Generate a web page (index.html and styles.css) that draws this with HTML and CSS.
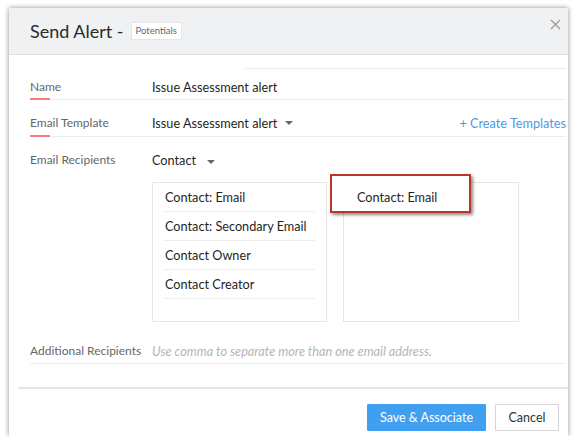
FILE: index.html
```html
<!DOCTYPE html>
<html>
<head>
<meta charset="utf-8">
<link rel="stylesheet" href="styles.css">
</head>
<body>
<div class="dialog">
  <div class="header">
    <span class="title">Send Alert -</span>
    <span class="badge">Potentials</span>
    <span class="close"><svg width="11" height="11" viewBox="0 0 11 11"><path d="M1 1L10 10M10 1L1 10" stroke="#9a9a9a" stroke-width="1.3" fill="none"/></svg></span>
  </div>
  <div class="body">
    <div class="topline"></div>
    <div class="row row-name">
      <div class="label marked">Name</div>
      <div class="value">Issue Assessment alert</div>
    </div>
    <div class="row row-tpl">
      <div class="label marked">Email Template</div>
      <div class="value">Issue Assessment alert <span class="caret"></span><a class="create">+ Create Templates</a></div>
    </div>
    <div class="row row-rcpt">
      <div class="label">Email Recipients</div>
      <div class="value">
        <div>Contact <span class="caret"></span></div>
        <div class="boxes">
          <div class="box">
            <div class="item">Contact: Email</div>
            <div class="item">Contact: Secondary Email</div>
            <div class="item">Contact Owner</div>
            <div class="item">Contact Creator</div>
          </div>
          <div class="box box-right">
            <div class="highlight"></div>
            <div class="item item-sel">Contact: Email</div>
          </div>
        </div>
      </div>
    </div>
    <div class="row row-add">
      <div class="label">Additional Recipients</div>
      <div class="value placeholder">Use comma to separate more than one email address.</div>
    </div>
  </div>
  <div class="footer">
    <button class="btn primary">Save &amp; Associate</button>
    <button class="btn cancel">Cancel</button>
  </div>
</div>
</body>
</html>
```
FILE: styles.css
```css
html, body {
  margin: 0;
  padding: 0;
  background: #ffffff;
}
body {
  font-family: Lato, "Open Sans", sans-serif;
  font-size: 12.7px;
  color: #333;
}
.dialog {
  width: 559px;
  height: 428px;
  margin: 8px 0 0 9px;
  background: #fff;
  box-shadow: 0 0 5px rgba(0, 0, 0, 0.45);
  display: flex;
  flex-direction: column;
}
.header {
  height: 46px;
  background: #f0f1f3;
  border-bottom: 1px solid #dedfe1;
  display: flex;
  align-items: center;
  padding-left: 21px;
}
.title {
  font-size: 18px;
  color: #2b2b2b;
}
.badge {
  margin-left: 7px;
  height: 16px;
  line-height: 16px;
  padding: 0 4px;
  background: #fff;
  border: 1px solid #e6e6e6;
  font-size: 9.5px;
  color: #666;
}
.close {
  margin-left: auto;
  margin-right: 7px;
  align-self: flex-start;
  margin-top: 11px;
  height: 11px;
  line-height: 0;
}
.topline {
  height: 1px;
  background: #e9e9e9;
  margin: 13px 2px 0 236px;
}
.row {
  display: grid;
  grid-template-columns: 122px 1fr;
  margin: 0 2px 0 21px;
  line-height: 16px;
}
.label {
  color: #666;
  font-size: 12px;
  position: relative;
}
.value {
  color: #1f1f1f;
}
.row-name {
  padding: 10px 0 4px;
  border-bottom: 1px solid #ececec;
}
.row-tpl {
  padding: 15px 0 5px;
  border-bottom: 1px solid #ececec;
}
.marked::after {
  content: "";
  position: absolute;
  left: 0;
  width: 20px;
  height: 2px;
  background: #f47e7a;
}
.row-name .marked::after { bottom: -5px; }
.row-tpl .marked::after { bottom: -6px; }
.row-tpl .value {
  display: flex;
  align-items: center;
}
.caret {
  display: inline-block;
  width: 0;
  height: 0;
  border-left: 4px solid transparent;
  border-right: 4px solid transparent;
  border-top: 4px solid #666;
  margin-left: 8px;
  vertical-align: middle;
}
.create {
  margin-left: auto;
  color: #4a9be6;
}
.row-rcpt {
  padding-top: 15px;
}
.boxes {
  display: flex;
  gap: 16px;
  margin-top: 14px;
}
.box {
  width: 173px;
  height: 138px;
  border: 1px solid #e6e6e6;
  position: relative;
}
.box-right {
  width: 174px;
}
.item {
  height: 28px;
  line-height: 28px;
  margin: 0 11px 0 11px;
  padding-left: 1px;
  border-bottom: 1px solid #eeeeee;
  color: #1f1f1f;
}
.item-sel {
  position: relative;
  z-index: 2;
  margin: 0 11px 0 0;
  padding-left: 13px;
  height: 29px;
  line-height: 29px;
  border-bottom-color: transparent;
}
.highlight {
  position: absolute;
  left: -14px;
  top: -9px;
  width: 137px;
  height: 35px;
  border: 2px solid #b8372a;
  background: #fff;
  box-shadow: 2px 2px 3px rgba(0, 0, 0, 0.45);
  z-index: 1;
}
.row-add {
  padding: 21px 0 4px;
  border-bottom: 1px solid #ececec;
}
.placeholder {
  color: #b5b5b5;
  font-style: italic;
}
.footer {
  margin: 23px 0 0 9px;
  border-top: 2px solid #e4e4e4;
  padding: 15px 9px 0 0;
  display: flex;
  justify-content: flex-end;
  gap: 9px;
}
.btn {
  height: 27px;
  padding: 0;
  font-family: Lato, "Open Sans", sans-serif;
  font-size: 12.5px;
  white-space: nowrap;
  background: #fff;
  border: 1px solid #d6d6d6;
  color: #333;
  border-radius: 1px;
}
.btn.primary {
  width: 119px;
  background: #40a0ef;
  border-color: #40a0ef;
  color: #fff;
}
.btn.cancel {
  width: 64px;
}
```
